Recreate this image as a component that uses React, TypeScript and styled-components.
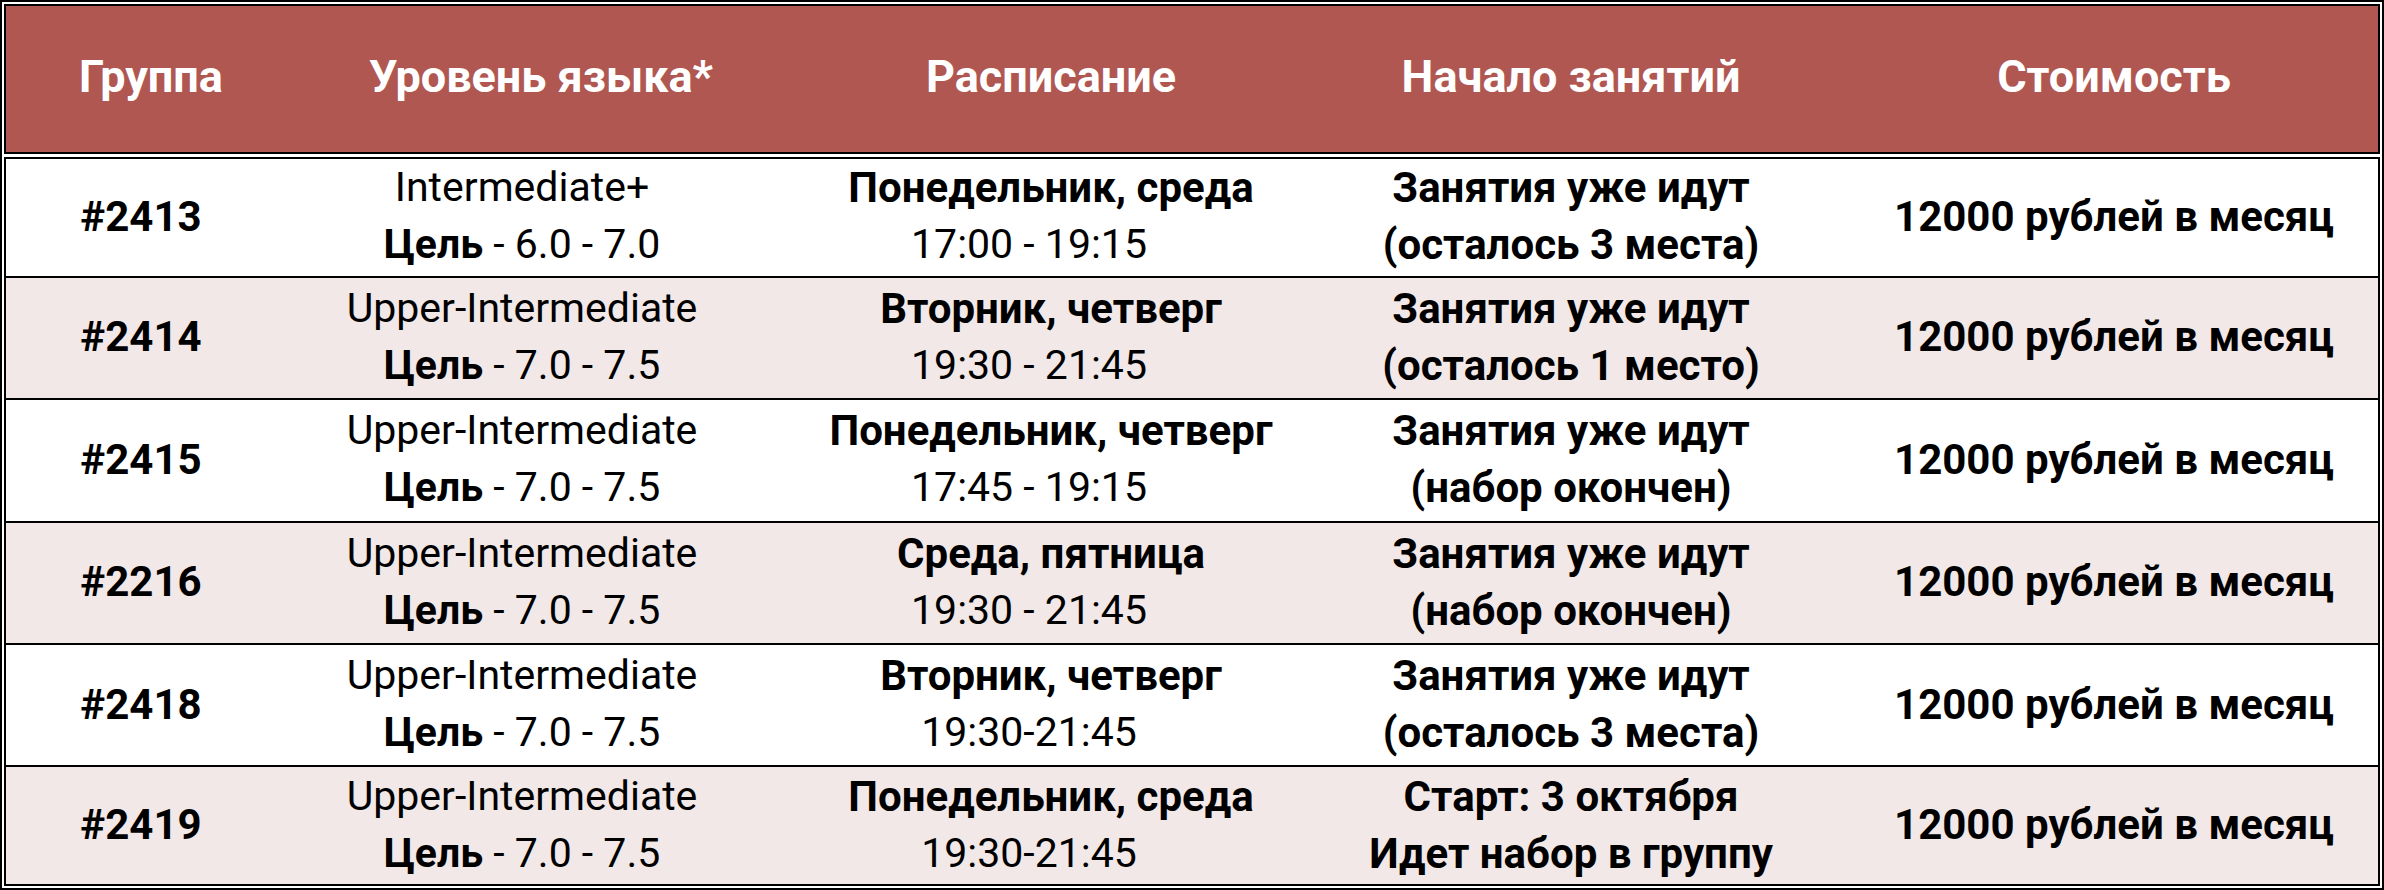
import styled, { createGlobalStyle } from "styled-components";

const GlobalStyle = createGlobalStyle`
    * {
        box-sizing: border-box;
    }
    body {
        margin: 0;
        background: #fff;
        font-family: Roboto, "Open Sans", sans-serif;
    }
`;

const cols = "290px 490px 530px 510px 1fr";

const Table = styled.div`
    display: flex;
    flex-direction: column;
    gap: 3px;
    width: 2384px;
    height: 890px;
    border: 2px solid #000;
    padding: 2px;
    background: #fff;
`;

const Head = styled.div`
    display: grid;
    grid-template-columns: ${cols};
    align-items: center;
    height: 150px;
    border: 2px solid #000;
    background: #b05752;
    color: #fff;
    font-size: 45px;
    font-weight: 700;
`;

const HeadCell = styled.div<{ $shift?: number }>`
    text-align: center;
    padding-left: ${(p) => p.$shift || 0}px;
    padding-bottom: 6px;
`;

const Body = styled.div`
    display: flex;
    flex-direction: column;
    flex: 1;
    border: 2px solid #000;
    border-bottom: none;
`;

const Row = styled.div<{ $alt: boolean }>`
    display: grid;
    grid-template-columns: ${cols};
    align-items: center;
    flex: 123;
    padding-bottom: 2px;
    border-bottom: 2px solid #000;
    background: ${(p) => (p.$alt ? "#f1e8e7" : "#fff")};
    color: #000;
    line-height: 57px;

    &:first-child,
    &:last-child {
        flex: 119;
    }
`;

const Cell = styled.div<{ $left?: number; $right?: number }>`
    display: flex;
    flex-direction: column;
    align-items: center;
    text-align: center;
    padding-left: ${(p) => p.$left || 0}px;
    padding-right: ${(p) => p.$right || 0}px;
`;

const Line = styled.div<{ $bold?: boolean; $right?: number }>`
    font-weight: ${(p) => (p.$bold ? 700 : 400)};
    font-size: ${(p) => (p.$bold ? 42 : 41)}px;
    padding-right: ${(p) => p.$right || 0}px;
    white-space: nowrap;
`;

const Strong = styled.b`
    font-weight: 700;
`;

type Group = {
    id: string;
    level: string;
    goal: string;
    days: string;
    time: string;
    start: string;
    note: string;
};

const groups: Group[] = [
    {
        id: "#2413",
        level: "Intermediate+",
        goal: "6.0 - 7.0",
        days: "Понедельник, среда",
        time: "17:00 - 19:15",
        start: "Занятия уже идут",
        note: "(осталось 3 места)",
    },
    {
        id: "#2414",
        level: "Upper-Intermediate",
        goal: "7.0 - 7.5",
        days: "Вторник, четверг",
        time: "19:30 - 21:45",
        start: "Занятия уже идут",
        note: "(осталось 1 место)",
    },
    {
        id: "#2415",
        level: "Upper-Intermediate",
        goal: "7.0 - 7.5",
        days: "Понедельник, четверг",
        time: "17:45 - 19:15",
        start: "Занятия уже идут",
        note: "(набор окончен)",
    },
    {
        id: "#2216",
        level: "Upper-Intermediate",
        goal: "7.0 - 7.5",
        days: "Среда, пятница",
        time: "19:30 - 21:45",
        start: "Занятия уже идут",
        note: "(набор окончен)",
    },
    {
        id: "#2418",
        level: "Upper-Intermediate",
        goal: "7.0 - 7.5",
        days: "Вторник, четверг",
        time: "19:30-21:45",
        start: "Занятия уже идут",
        note: "(осталось 3 места)",
    },
    {
        id: "#2419",
        level: "Upper-Intermediate",
        goal: "7.0 - 7.5",
        days: "Понедельник, среда",
        time: "19:30-21:45",
        start: "Старт: 3 октября",
        note: "Идет набор в группу",
    },
];

function App() {
    return (
        <>
            <GlobalStyle />
            <Table>
                <Head>
                    <HeadCell>Группа</HeadCell>
                    <HeadCell>Уровень языка*</HeadCell>
                    <HeadCell>Расписание</HeadCell>
                    <HeadCell>Начало занятий</HeadCell>
                    <HeadCell $shift={24}>Стоимость</HeadCell>
                </Head>
                <Body>
                    {groups.map((g, i) => (
                        <Row key={g.id} $alt={i % 2 === 1}>
                            <Cell $right={20}>
                                <Line $bold>{g.id}</Line>
                            </Cell>
                            <Cell $right={38}>
                                <Line>{g.level}</Line>
                                <Line>
                                    <Strong>Цель</Strong> - {g.goal}
                                </Line>
                            </Cell>
                            <Cell>
                                <Line $bold>{g.days}</Line>
                                <Line $right={44}>{g.time}</Line>
                            </Cell>
                            <Cell>
                                <Line $bold>{g.start}</Line>
                                <Line $bold>{g.note}</Line>
                            </Cell>
                            <Cell $left={24}>
                                <Line $bold>12000 рублей в месяц</Line>
                            </Cell>
                        </Row>
                    ))}
                </Body>
            </Table>
        </>
    );
}

export default App;
